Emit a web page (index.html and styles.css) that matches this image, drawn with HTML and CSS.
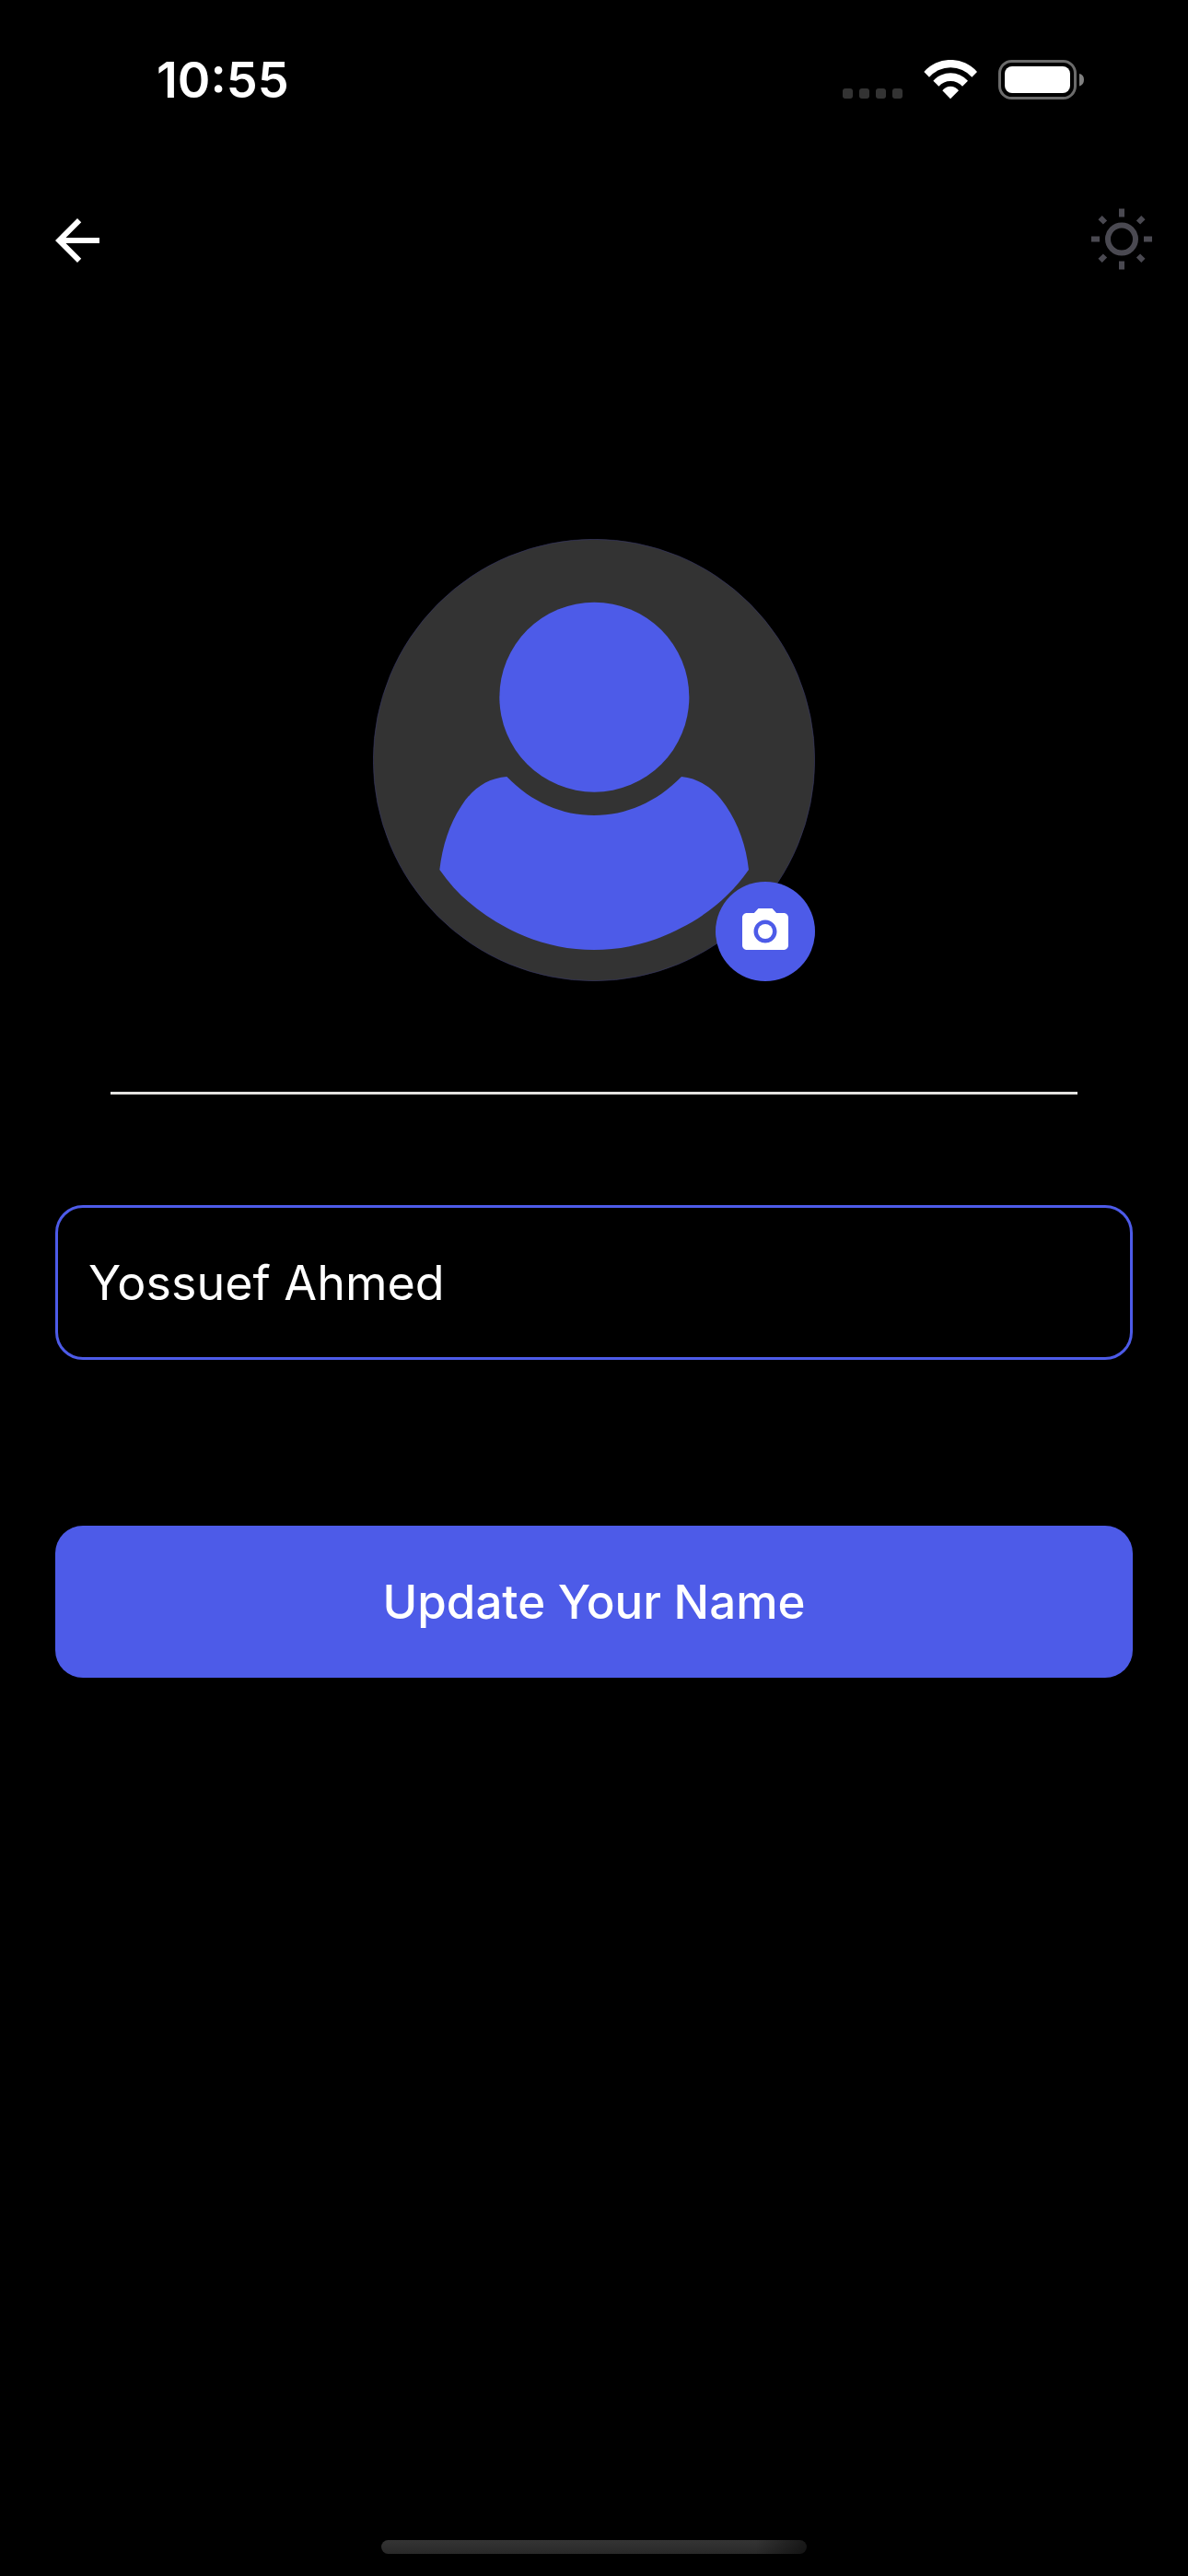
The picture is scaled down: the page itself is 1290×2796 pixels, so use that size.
FILE: index.html
```html
<!DOCTYPE html>
<html lang="en">
<head>
<meta charset="utf-8">
<meta name="viewport" content="width=device-width, initial-scale=1">
<title>Edit profile</title>
<link rel="stylesheet" href="styles.css">
</head>
<body>
<div class="screen">
  <div class="status">
    <time class="status-time">10:55</time>
    <div class="status-icons">
      <svg width="65" height="44" viewBox="0 0 65 44" fill="#333" aria-hidden="true">
        <rect x="0" y="31" width="11" height="11" rx="3"/><rect x="18" y="31" width="11" height="11" rx="3"/><rect x="36" y="31" width="11" height="11" rx="3"/><rect x="54" y="31" width="11" height="11" rx="3"/>
      </svg>
      <svg width="58" height="44" viewBox="310 45 174 132" fill="#fff" aria-hidden="true">
        <path d="M311 84A115 115 0 0 1 484 84L467 101A93 93 0 0 0 328 101Z"/>
        <path d="M341 113A76 76 0 0 1 454 113L436 131A52 52 0 0 0 359 131Z"/>
        <path d="M371 145A32 32 0 0 1 424 145L397 172Z"/>
      </svg>
      <svg width="94" height="44" viewBox="0 0 94 44" aria-hidden="true">
        <rect x="1.5" y="1.5" width="82" height="40" rx="13" fill="none" stroke="#6b6b6b" stroke-width="3"/>
        <rect x="7" y="7" width="71" height="29" rx="8" fill="#fff"/>
        <path d="M88 15Q93 16 93 21.500Q93 27 88 28.500Z" fill="#808080"/>
      </svg>
    </div>
  </div>

  <header class="bar">
    <button class="icon-button" type="button" aria-label="Back">
      <svg width="72" height="72" viewBox="0 0 24 24" fill="#fff"><path d="M20 11H7.830l5.590-5.590L12 4l-8 8 8 8 1.410-1.410L7.830 13H20v-2z"/></svg>
    </button>
    <button class="icon-button" type="button" aria-label="Toggle theme">
      <svg width="72" height="72" viewBox="0 0 24 24" fill="none" stroke="#4a4951" stroke-width="2">
        <circle cx="12" cy="11.500" r="5"/>
        <path d="M12 .5v3M12 19.500v3M1 11.500h3M20 11.500h3M4.200 3.700l1.800 1.800M19.800 3.700l-1.800 1.800M4.200 19.300l1.800-1.800M19.800 19.300l-1.800-1.800"/>
      </svg>
    </button>
  </header>

  <main class="content">
    <div class="avatar">
      <svg viewBox="45 45 1440 1440" role="img" aria-label="Profile picture">
        <circle cx="765" cy="765" r="719" fill="#333" stroke="#363663" stroke-width="2"/>
        <g fill="#4d5be8">
          <circle cx="766" cy="560" r="309"/>
          <path d="M481 819C562 903 662 945 765 945C868 945 968 903 1050 819C1108 825 1157 857 1195 914C1236 975 1261 1045 1269 1122C1213 1202 1139 1266 1048 1312C959 1359 864 1383 765 1383C666 1383 571 1359 482 1312C391 1264 317 1202 262 1122C271 1046 294 972 333 914C370 856 419 824 481 819Z"/>
        </g>
      </svg>
      <button class="camera" type="button" aria-label="Change picture">
        <svg width="60" height="60" viewBox="0 0 24 24" fill="#fff"><circle cx="12" cy="12" r="3.200"/><path d="M9 2 7.170 4H4c-1.100 0-2 .9-2 2v12c0 1.100.9 2 2 2h16c1.100 0 2-.9 2-2V6c0-1.100-.9-2-2-2h-3.170L15 2H9zm3 15c-2.760 0-5-2.240-5-5s2.240-5 5-5 5 2.240 5 5-2.240 5-5 5z"/></svg>
      </button>
    </div>
    <hr class="divider">
    <form class="form">
      <input class="field" type="text" name="name" value="Yossuef Ahmed" aria-label="Your name">
      <button class="submit" type="button">Update Your Name</button>
    </form>
  </main>

  <div class="home-indicator"></div>
</div>
</body>
</html>
```
FILE: styles.css
```css
* {
  box-sizing: border-box;
}

body {
  margin: 0;
  background: #000;
  color: #fff;
  font-family: Inter, "Liberation Sans", sans-serif;
}

button {
  border: 0;
  padding: 0;
  color: inherit;
  font-family: inherit;
}

svg {
  display: block;
}

.screen {
  display: flex;
  flex-direction: column;
  min-height: 100vh;
}

.status {
  display: flex;
  align-items: center;
  justify-content: space-between;
  height: 174px;
  padding: 0 112px 0 170px;
}

.status-time {
  font-size: 54px;
  font-weight: 600;
  line-height: 64px;
}

.status-icons {
  display: flex;
  gap: 23px;
}

.bar {
  display: flex;
  align-items: center;
  justify-content: space-between;
  height: 174px;
  padding: 0 36px 0 48px;
}

.icon-button {
  background: none;
}

.content {
  display: flex;
  flex: 1;
  flex-direction: column;
  align-items: center;
  padding: 237px 60px 60px;
}

.avatar {
  position: relative;
  width: 480px;
  max-width: 100%;
}

.camera {
  position: absolute;
  right: 0;
  bottom: 0;
  display: grid;
  place-items: center;
  width: 108px;
  height: 108px;
  border-radius: 50%;
  background: #4d5be8;
}

.divider {
  align-self: stretch;
  height: 3px;
  margin: 120px 60px;
  border: 0;
  background: #e3e2e0;
}

.form {
  display: flex;
  flex-direction: column;
  align-self: stretch;
  gap: 180px;
}

.field {
  width: 100%;
  height: 168px;
  padding: 0 33px;
  border: 3px solid #4d5be8;
  border-radius: 30px;
  outline: 0;
  background: transparent;
  color: #fff;
  font-family: inherit;
  font-size: 52px;
  font-weight: 400;
}

.submit {
  height: 165px;
  border-radius: 30px;
  background: #4d5be8;
  font-size: 51px;
  font-weight: 500;
}

.home-indicator {
  align-self: center;
  width: 462px;
  height: 15px;
  margin-bottom: 24px;
  border-radius: 8px;
  background: linear-gradient(90deg, transparent 88%, #0008), linear-gradient(#343434, #292929);
}
```
